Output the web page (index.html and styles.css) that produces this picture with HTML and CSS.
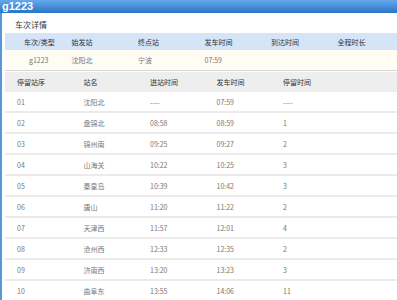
FILE: index.html
```html
<!DOCTYPE html>
<html lang="zh-CN">
<head>
<meta charset="utf-8">
<title>g1223</title>
<link rel="stylesheet" href="styles.css">
</head>
<body>
<div class="topbar">g1223</div>
<div class="panel">
  <div class="section-title">车次详情</div>
  <div class="info">
    <div class="info-head">
      <div class="c first-h">车次/类型</div>
      <div class="c">始发站</div>
      <div class="c">终点站</div>
      <div class="c">发车时间</div>
      <div class="c">到达时间</div>
      <div class="c">全程时长</div>
    </div>
    <div class="info-row">
      <div class="c first-d">g1223</div>
      <div class="c">沈阳北</div>
      <div class="c">宁波</div>
      <div class="c">07:59</div>
      <div class="c"></div>
      <div class="c"></div>
    </div>
  </div>
  <div class="stops">
    <div class="stops-head">
      <div class="s">停留站序</div>
      <div class="s">站名</div>
      <div class="s">进站时间</div>
      <div class="s">发车时间</div>
      <div class="s">停留时间</div>
      <div class="s"></div>
    </div>
    <div class="stop-row"><div class="s">01</div><div class="s">沈阳北</div><div class="s">----</div><div class="s">07:59</div><div class="s">----</div><div class="s"></div></div>
    <div class="stop-row"><div class="s">02</div><div class="s">盘锦北</div><div class="s">08:58</div><div class="s">08:59</div><div class="s">1</div><div class="s"></div></div>
    <div class="stop-row"><div class="s">03</div><div class="s">锦州南</div><div class="s">09:25</div><div class="s">09:27</div><div class="s">2</div><div class="s"></div></div>
    <div class="stop-row"><div class="s">04</div><div class="s">山海关</div><div class="s">10:22</div><div class="s">10:25</div><div class="s">3</div><div class="s"></div></div>
    <div class="stop-row"><div class="s">05</div><div class="s">秦皇岛</div><div class="s">10:39</div><div class="s">10:42</div><div class="s">3</div><div class="s"></div></div>
    <div class="stop-row"><div class="s">06</div><div class="s">唐山</div><div class="s">11:20</div><div class="s">11:22</div><div class="s">2</div><div class="s"></div></div>
    <div class="stop-row"><div class="s">07</div><div class="s">天津西</div><div class="s">11:57</div><div class="s">12:01</div><div class="s">4</div><div class="s"></div></div>
    <div class="stop-row"><div class="s">08</div><div class="s">沧州西</div><div class="s">12:33</div><div class="s">12:35</div><div class="s">2</div><div class="s"></div></div>
    <div class="stop-row"><div class="s">09</div><div class="s">济南西</div><div class="s">13:20</div><div class="s">13:23</div><div class="s">3</div><div class="s"></div></div>
    <div class="stop-row"><div class="s">10</div><div class="s">曲阜东</div><div class="s">13:55</div><div class="s">14:06</div><div class="s">11</div><div class="s"></div></div>
  </div>
</div>
</body>
</html>
```
FILE: styles.css
```css
html, body {
  margin: 0;
  padding: 0;
  background: #ffffff;
  overflow: hidden;
}
body {
  font-family: "Noto Sans CJK SC", "Liberation Sans", sans-serif;
  font-size: 7px;
  color: #555;
}
.topbar {
  height: 13px;
  line-height: 13px;
  padding-left: 2px;
  background: linear-gradient(#66a8ea, #3a84d2 70%, #2c74c2);
  color: #ffffff;
  font-family: "Liberation Sans", sans-serif;
  font-weight: bold;
  font-size: 11px;
}
.panel {
  border-left: 2px solid #5a97d8;
  padding-left: 3px;
  min-height: 300px;
}
.section-title {
  height: 20px;
  box-sizing: border-box;
  padding: 4px 0 0 10px;
  line-height: 16px;
  font-size: 8px;
  color: #333;
}
.info-head, .info-row, .stops-head, .stop-row {
  display: grid;
  grid-template-columns: repeat(6, 66.5px);
  align-items: center;
}
.info-head {
  height: 17px;
  background: #d5e4f6;
  color: #333;
}
.info-row {
  height: 20px;
  background: #fffcf3;
  color: #777;
  border-bottom: 1px solid #d6d6d6;
}
.c { white-space: nowrap; }
.c.first-h { padding-left: 19px; }
.c.first-d { padding-left: 24px; }
.stops-head {
  margin-top: 1px;
  height: 20px;
  background: #eeeeee;
  color: #333;
}
.stop-row {
  height: 19px;
  border-bottom: 2px solid #ebebeb;
  color: #777;
}
.s {
  padding-left: 12px;
  white-space: nowrap;
}
```
